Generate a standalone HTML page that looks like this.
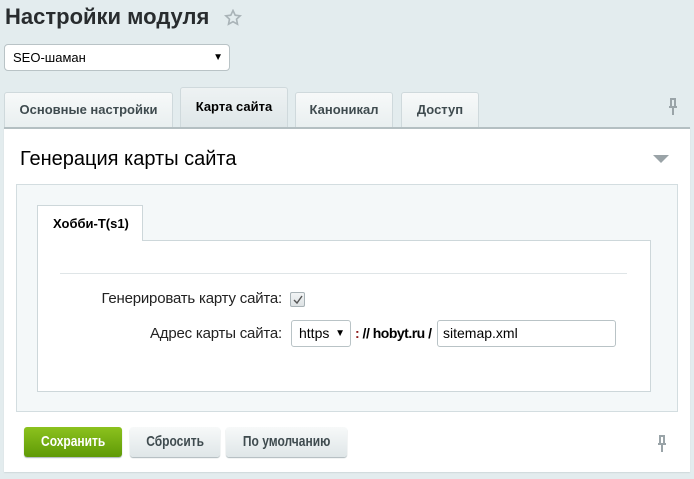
<!DOCTYPE html>
<html><head><meta charset="utf-8"><style>
*{box-sizing:border-box;margin:0;padding:0}
body{width:694px;height:479px;background:#e3ecee;font-family:"Liberation Sans",sans-serif;position:relative;overflow:hidden;color:#000}
.a{position:absolute}
.tab{position:absolute;top:92px;height:35px;background:linear-gradient(#f7f9f9,#e9eff0);border:1px solid #cfd9dc;border-bottom:none;border-radius:3px 3px 0 0;font-size:13px;font-weight:bold;color:#3f4b4f;text-align:center;line-height:33px}
.btn{position:absolute;top:427px;height:30px;border-radius:3px;font-size:15px;font-weight:bold;text-align:center;line-height:29px;background:linear-gradient(#f7f9f9,#dfe6e8);color:#3f4b4f;box-shadow:0 1px 1px #aab5b9;white-space:nowrap}
.btn span{display:inline-block;transform:scaleX(.8)}
.lbl{position:absolute;left:0;width:282px;text-align:right;font-size:15px;color:#222;letter-spacing:-0.2px}
</style></head><body>
<div class="a" style="left:5px;top:4px;font-size:22px;font-weight:bold;color:#282c2e">Настройки модуля</div>
<svg class="a" style="left:224px;top:9px" width="18" height="18" viewBox="0 0 18 18"><path d="M9 1.5l2.2 4.7 5 .6-3.7 3.4 1 5-4.5-2.5-4.5 2.5 1-5L1.8 6.8l5-.6z" fill="none" stroke="#a9b3b7" stroke-width="1.6"/></svg>
<div class="a" style="left:4px;top:44px;width:226px;height:27px;background:#fff;border:1px solid #b9c3c6;border-radius:4px;font-size:13px;line-height:25px;padding-left:8px">SEO-шаман<span class="a" style="right:6px;top:0;font-size:10px">▼</span></div>
<div class="tab" style="left:4px;width:169px">Основные настройки</div>
<div class="tab" style="left:180px;top:87px;height:40px;width:108px;color:#000;background:linear-gradient(#eef2f3,#dfe7e9);line-height:38px">Карта сайта</div>
<div class="tab" style="left:295px;width:98px">Каноникал</div>
<div class="tab" style="left:401px;width:78px">Доступ</div>
<svg class="a" style="left:667px;top:98px" width="12" height="18"><path d="M3 1h6M4 1v7M8 1v7M2 9h8M6 9v8" stroke="#9aa4a8" stroke-width="2" fill="none"/></svg>
<div class="a" style="left:4px;top:127px;width:686px;height:345px;background:#fff;border-top:2px solid #b4bfc2;box-shadow:0 1px 1px #cfd8db"></div>
<div class="a" style="left:20px;top:148px;font-size:20px;color:#000">Генерация карты сайта</div>
<svg class="a" style="left:653px;top:155px" width="16" height="8"><path d="M0 0h16L8 8z" fill="#9aa3a7"/></svg>
<div class="a" style="left:16px;top:184px;width:662px;height:228px;background:#f4f8f9;border:1px solid #d3dde0"></div>
<div class="a" style="left:37px;top:240px;width:614px;height:152px;background:#fff;border:1px solid #cdd7da"></div>
<div class="a" style="left:37px;top:205px;width:106px;height:36px;background:#fff;border:1px solid #cdd7da;border-bottom:none;font-size:13px;font-weight:bold;line-height:36px;padding-left:15px">Хобби-Т(s1)</div>
<div class="a" style="left:60px;top:273px;width:567px;height:1px;background:#dfe5e7"></div>
<div class="lbl" style="top:290px">Генерировать карту сайта:</div>
<div class="a" style="left:290px;top:292px;width:15px;height:15px;border:1px solid #a8b2b6;border-radius:2px;background:linear-gradient(#f2f4f5,#dde2e4)"><svg width="13" height="13" class="a" style="left:0;top:0"><path d="M3 7l3 3 5-7" stroke="#555" stroke-width="1.4" fill="none"/></svg></div>
<div class="lbl" style="top:325px">Адрес карты сайта:</div>
<div class="a" style="left:291px;top:320px;width:60px;height:27px;border:1px solid #b9c3c6;border-radius:3px;background:#fff;font-size:14px;line-height:25px;padding-left:7px">https<span class="a" style="right:5px;top:0;font-size:10px">▼</span></div>
<div class="a" style="left:355px;top:325px;font-size:14px;font-weight:bold;letter-spacing:-0.5px"><span style="color:#8b1a1a">:</span> // hobyt.ru /</div>
<div class="a" style="left:437px;top:320px;width:179px;height:27px;border:1px solid #b9c3c6;border-radius:3px;background:#fff;font-size:14px;line-height:25px;padding-left:5px">sitemap.xml</div>
<div class="btn" style="left:24px;width:98px;background:linear-gradient(#8cc21e,#5f9a06);color:#fff"><span>Сохранить</span></div>
<div class="btn" style="left:130px;width:90px"><span>Сбросить</span></div>
<div class="btn" style="left:226px;width:121px"><span>По умолчанию</span></div>
<svg class="a" style="left:656px;top:435px" width="12" height="18"><path d="M3 1h6M4 1v7M8 1v7M2 9h8M6 9v8" stroke="#9aa4a8" stroke-width="2" fill="none"/></svg>
</body></html>
